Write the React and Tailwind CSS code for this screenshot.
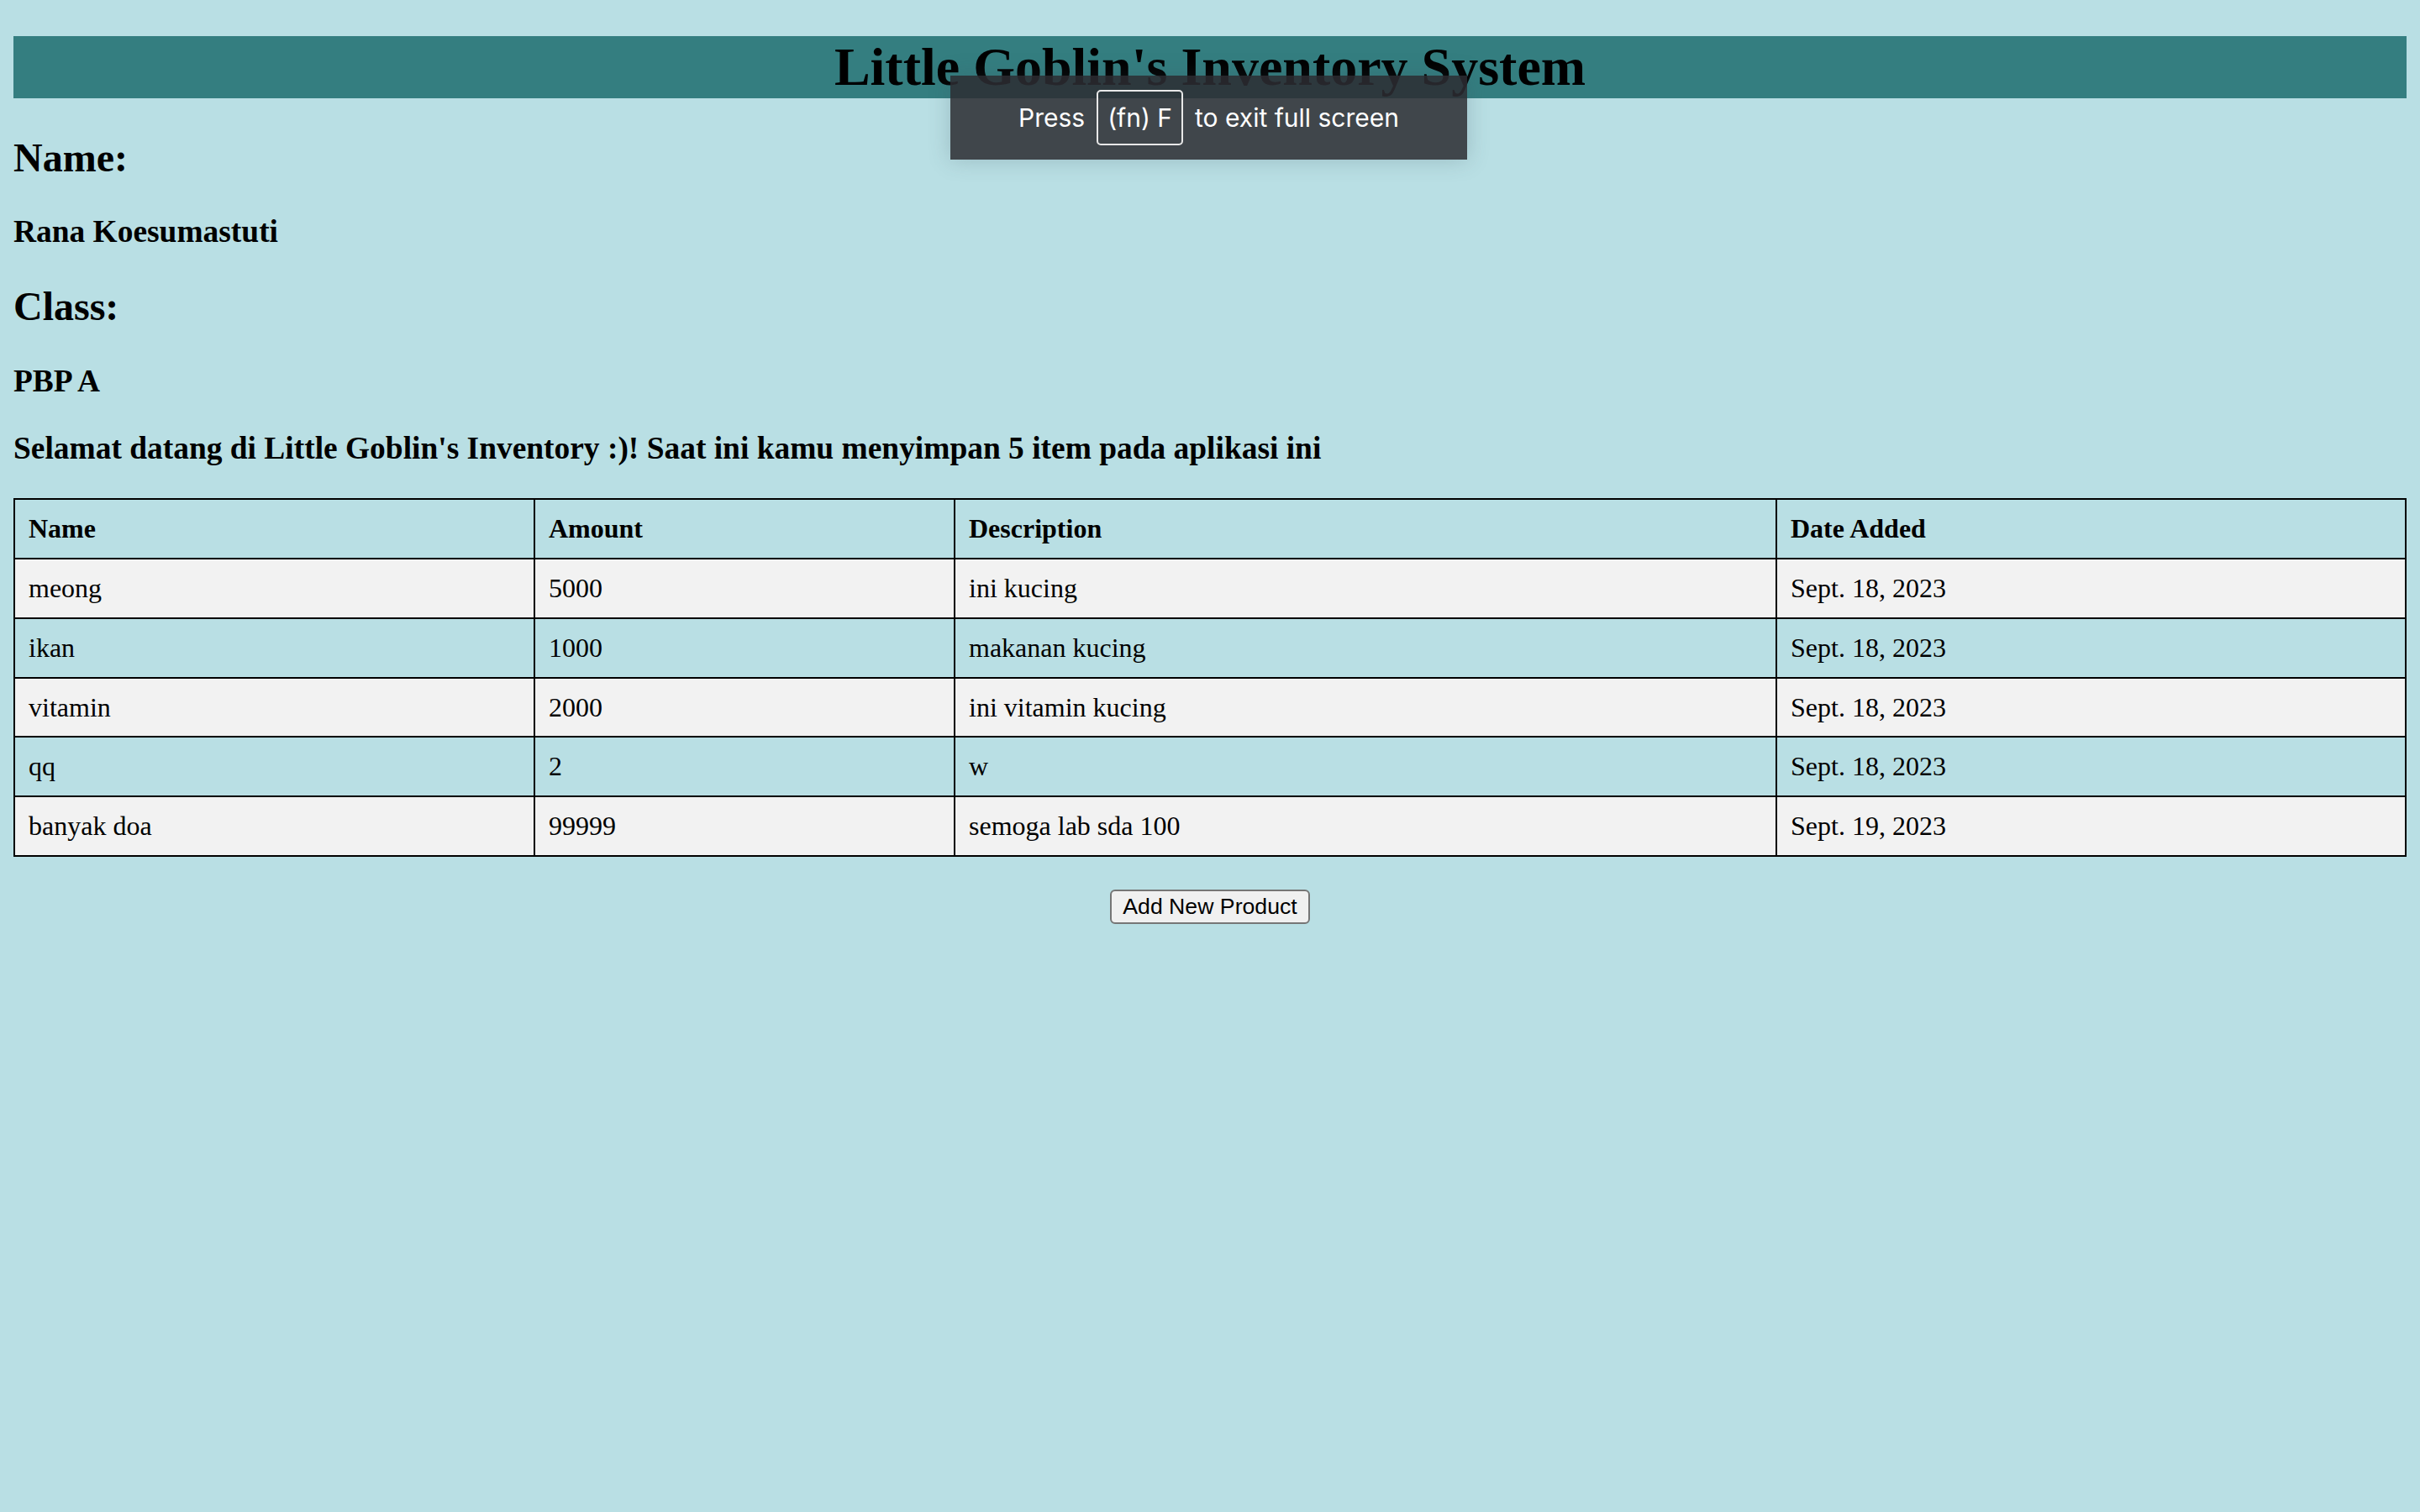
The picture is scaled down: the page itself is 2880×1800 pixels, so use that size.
const products = [
  { name: "meong", amount: "5000", description: "ini kucing", date: "Sept. 18, 2023" },
  { name: "ikan", amount: "1000", description: "makanan kucing", date: "Sept. 18, 2023" },
  { name: "vitamin", amount: "2000", description: "ini vitamin kucing", date: "Sept. 18, 2023" },
  { name: "qq", amount: "2", description: "w", date: "Sept. 18, 2023" },
  { name: "banyak doa", amount: "99999", description: "semoga lab sda 100", date: "Sept. 19, 2023" },
];

function FullScreenToast() {
  return (
    <div className="absolute top-[90px] left-[1131px] w-[615px] h-[100px] bg-[rgba(44,44,50,0.86)] shadow-[0_0_24px_rgba(60,80,90,0.25)] flex items-center justify-center gap-[14px] font-['Inter',sans-serif] text-[30px] text-white">
      <span>Press</span>
      <span className="h-[66px] px-[11px] flex items-center border-2 border-[#e8e8e8] rounded-[5px]">(fn) F</span>
      <span>to exit full screen</span>
    </div>
  );
}

export default function App() {
  return (
    <div className="relative min-h-screen bg-[#b9dfe4] px-4 pt-[43px] pb-10 font-['Liberation_Serif',serif] text-black">
      <h1 className="bg-[#347e80] text-center text-[64px] font-bold leading-[1.15]">
        Little Goblin's Inventory System
      </h1>

      <h2 className="mt-[43px] text-[48px] font-bold leading-[1.15]">Name:</h2>
      <h3 className="mt-[39px] text-[37.44px] font-bold leading-[1.15]">Rana Koesumastuti</h3>

      <h2 className="mt-[40px] text-[48px] font-bold leading-[1.15]">Class:</h2>
      <h3 className="mt-[40px] text-[37.44px] font-bold leading-[1.15]">PBP A</h3>

      <h3 className="mt-[37px] text-[37.44px] font-bold leading-[1.15]">
        Selamat datang di Little Goblin's Inventory :)! Saat ini kamu menyimpan 5 item pada aplikasi ini
      </h3>

      <table className="mt-[38px] w-full table-fixed border-collapse border-2 border-black text-[32px] leading-[1.15]">
        <colgroup>
          <col className="w-[619px]" />
          <col className="w-[500px]" />
          <col className="w-[978px]" />
          <col />
        </colgroup>
        <thead>
          <tr>
            <th className="border-2 border-black p-4 text-left font-bold">Name</th>
            <th className="border-2 border-black p-4 text-left font-bold">Amount</th>
            <th className="border-2 border-black p-4 text-left font-bold">Description</th>
            <th className="border-2 border-black p-4 text-left font-bold">Date Added</th>
          </tr>
        </thead>
        <tbody>
          {products.map((p, i) => (
            <tr key={p.name} className={i % 2 === 0 ? "bg-[#f2f2f2]" : ""}>
              <td className="border-2 border-black p-4">{p.name}</td>
              <td className="border-2 border-black p-4">{p.amount}</td>
              <td className="border-2 border-black p-4">{p.description}</td>
              <td className="border-2 border-black p-4">{p.date}</td>
            </tr>
          ))}
        </tbody>
      </table>

      <div className="mt-[39px] flex justify-center">
        <button className="px-[13px] py-[3px] bg-[#f0f0f0] border-2 border-[#767676] rounded-[6px] font-['Liberation_Sans',sans-serif] text-[26.67px] leading-[1.15]">
          Add New Product
        </button>
      </div>

      <FullScreenToast />
    </div>
  );
}
